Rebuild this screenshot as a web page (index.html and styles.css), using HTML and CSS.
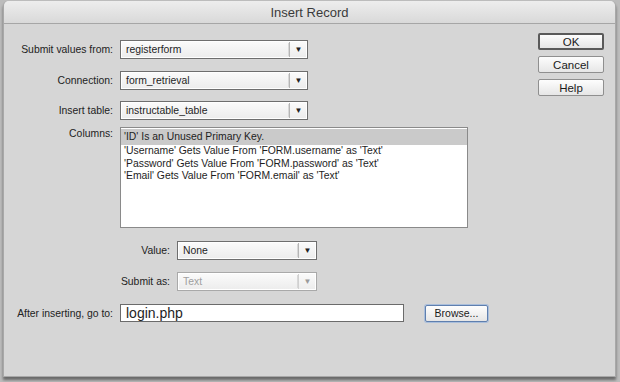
FILE: index.html
```html
<!DOCTYPE html>
<html lang="en">
<head>
    <meta charset="UTF-8">
    <title>Insert Record</title>
    <link rel="stylesheet" href="styles.css">
</head>
<body>
    <div class="window">
        <div class="titlebar">Insert Record</div>
        <div class="content">
            <div class="form">
                <div class="row row-first">
                    <span class="label">Submit values from:</span>
                    <div class="select wide"><span class="value">registerform</span><span class="arrow">&#9660;</span></div>
                </div>
                <div class="row row-conn">
                    <span class="label">Connection:</span>
                    <div class="select wide"><span class="value">form_retrieval</span><span class="arrow">&#9660;</span></div>
                </div>
                <div class="row row-table">
                    <span class="label">Insert table:</span>
                    <div class="select wide"><span class="value">instructable_table</span><span class="arrow">&#9660;</span></div>
                </div>
                <div class="row row-columns">
                    <span class="label label-top">Columns:</span>
                    <ul class="listbox">
                        <li class="selected">'ID' Is an Unused Primary Key.</li>
                        <li>'Username' Gets Value From 'FORM.username' as 'Text'</li>
                        <li>'Password' Gets Value From 'FORM.password' as 'Text'</li>
                        <li>'Email' Gets Value From 'FORM.email' as 'Text'</li>
                    </ul>
                </div>
                <div class="row row-value">
                    <span class="label label-sub">Value:</span>
                    <div class="select narrow"><span class="value">None</span><span class="arrow">&#9660;</span></div>
                </div>
                <div class="row row-submit">
                    <span class="label label-sub">Submit as:</span>
                    <div class="select narrow disabled"><span class="value">Text</span><span class="arrow">&#9660;</span></div>
                </div>
                <div class="row row-after">
                    <span class="label">After inserting, go to:</span>
                    <div class="text-input">login.php</div>
                    <button class="btn browse">Browse...</button>
                </div>
            </div>
            <div class="buttons">
                <button class="btn default">OK</button>
                <button class="btn">Cancel</button>
                <button class="btn">Help</button>
            </div>
        </div>
    </div>
</body>
</html>
```

FILE: styles.css
```css
* {
    box-sizing: border-box;
    margin: 0;
    padding: 0;
}

body {
    background-color: #bcbcbc;
    font-family: 'Liberation Sans', Arial, sans-serif;
    font-size: 10.4px;
    color: #1e1e1e;
    width: 620px;
    height: 382px;
    overflow: hidden;
}

.window {
    margin: 1px 4px 0 3px;
    height: 376px;
    background-color: #d6d6d6;
    border: 1px solid #a8a8a8;
    border-top: none;
    border-radius: 5px 5px 0 0;
    box-shadow: 0 3px 3px rgba(0, 0, 0, 0.45);
}

.titlebar {
    height: 23px;
    line-height: 23px;
    text-align: center;
    font-size: 13px;
    color: #3a3a3a;
    background: linear-gradient(#ededed, #d9d9d9);
    border-bottom: 1px solid #a6a6a6;
    border-radius: 5px 5px 0 0;
}

.content {
    display: flex;
}

.form {
    flex: 1;
}

.row {
    display: flex;
    align-items: center;
}

.row-first { margin-top: 16px; }
.row-conn { margin-top: 12px; }
.row-table { margin-top: 11px; }
.row-columns { margin-top: 7px; align-items: flex-start; }
.row-value { margin-top: 13px; }
.row-submit { margin-top: 12px; }
.row-after { margin-top: 13px; }

.label {
    width: 109px;
    text-align: right;
    margin-right: 7px;
    color: #222;
}

.label-top {
    padding-top: 1px;
}

.label-sub {
    width: 166px;
}

.select {
    display: flex;
    align-items: center;
    height: 19px;
    background: linear-gradient(#fbfbfb, #ececec);
    border: 1px solid #6e6e6e;
    box-shadow: inset 0 0 0 1px #fff;
}

.select.wide { width: 188px; }
.select.narrow { width: 140px; }

.select .value {
    flex: 1;
    padding-left: 5px;
}

.select .arrow {
    width: 18px;
    height: 15px;
    line-height: 15px;
    text-align: center;
    font-size: 8px;
    color: #222;
    border-left: 1px solid #b5b5b5;
    box-shadow: -2px 0 0 -1px #d8d8d8;
}

.select.disabled {
    border-color: #a9a9a9;
    color: #a0a0a0;
}

.select.disabled .arrow {
    color: #9a9a9a;
    border-left-color: #d0d0d0;
}

.listbox {
    list-style: none;
    width: 348px;
    height: 101px;
    background-color: #fff;
    border: 1px solid #8a8a8a;
    padding-top: 1px;
}

.listbox li {
    height: 12.5px;
    line-height: 12.5px;
    padding-left: 3px;
    white-space: nowrap;
}

.listbox li.selected {
    background-color: #cacaca;
    height: 16px;
    line-height: 16px;
}

.text-input {
    width: 284px;
    height: 18px;
    line-height: 16px;
    padding-left: 5px;
    font-size: 14px;
    background-color: #fff;
    border: 1px solid #6b6b6b;
}

.btn {
    font-family: 'Liberation Sans', Arial, sans-serif;
    font-size: 11.5px;
    color: #1a1a1a;
    height: 17px;
    background: linear-gradient(#fdfdfd, #e6e6e6);
    border: 1px solid #8f8f8f;
    border-radius: 2px;
}

.browse {
    width: 63px;
    margin-left: 21px;
    font-size: 10.5px;
    border-color: #5f7fae;
    box-shadow: 0 0 0 1px #a9bedb;
}

.buttons {
    display: flex;
    flex-direction: column;
    gap: 6px;
    width: 66px;
    margin: 9px 11px 0 0;
}

.buttons .btn {
    width: 66px;
}

.buttons .default {
    border: 2px solid #5a5a5a;
}
```
